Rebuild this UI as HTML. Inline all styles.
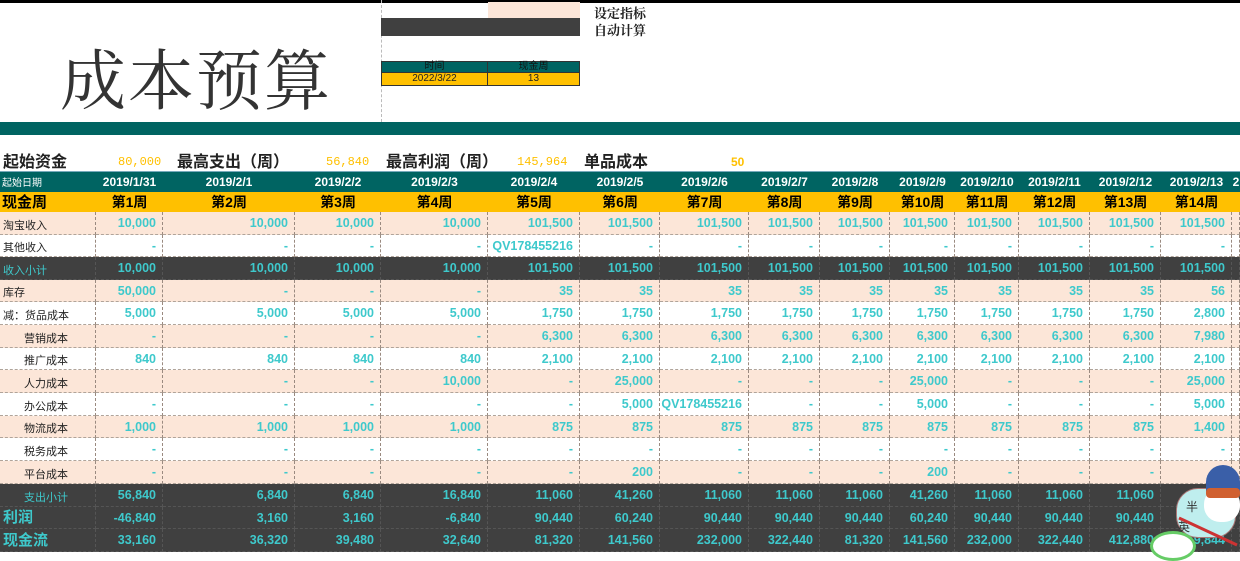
<!DOCTYPE html>
<html><head><meta charset="utf-8"><style>
*{margin:0;padding:0;box-sizing:border-box}
body{width:1240px;height:547px;overflow:hidden;background:#fff;position:relative;font-family:"Liberation Sans","Noto Sans CJK SC",sans-serif}
.a{position:absolute}
.r{position:absolute;left:0;width:1240px;display:flex}
.r div{flex:none;height:100%;text-align:right;padding-right:6px;font-size:12.5px;font-weight:bold;color:#3ec9cc;border-right:1px dashed #9a8a80;border-bottom:1px dashed #b0a49a;display:flex;align-items:center;justify-content:flex-end;white-space:nowrap;overflow:hidden}
.r div:first-child{justify-content:flex-start;text-align:left;padding-left:3px;font-weight:normal;color:#222;font-size:11px;align-items:flex-end;padding-bottom:1px}
.p{background:#fce6d8}.w{background:#fff}.d{background:#404040}
.d div{border-color:#555}
.i div:first-child{padding-left:24px}
.hd div{justify-content:center;padding:0;color:#fff;font-size:12px;border:none}
.wk div{justify-content:center;padding:0;color:#000;font-size:14px;border:none}
</style></head><body>
<div class="a" style="left:0;top:0;width:1240px;height:3px;background:#000"></div>
<div class="a" style="left:60px;top:28px;font-family:'Noto Serif CJK SC',serif;font-size:66px;color:#333;letter-spacing:2px">成本预算</div>
<div class="a" style="left:381px;top:0;height:122px;border-left:1px dashed #bbb"></div>
<div class="a" style="left:488px;top:2px;width:92px;height:16px;background:#fce6d8"></div>
<div class="a" style="left:381px;top:18px;width:199px;height:18px;background:#404040"></div>
<div class="a" style="left:594px;top:4px;font-family:'Noto Serif CJK SC',serif;font-size:13px;font-weight:bold;color:#222;line-height:17px">设定指标<br>自动计算</div>
<div class="a" style="left:381px;top:61px;width:199px;height:12px;background:#006462;font-size:10px;color:#111;display:flex;border:1px solid #333"><span style="width:107px;text-align:center;border-right:1px solid #333;line-height:10px">时间</span><span style="width:92px;text-align:center;line-height:10px">现金周</span></div>
<div class="a" style="left:381px;top:73px;width:199px;height:13px;background:#ffc000;font-size:10px;color:#222;display:flex;border:1px solid #333;border-top:none"><span style="width:107px;text-align:center;border-right:1px solid #333;line-height:12px">2022/3/22</span><span style="width:92px;text-align:center;line-height:12px">13</span></div>
<div class="a" style="left:0;top:122px;width:1240px;height:13px;background:#006462"></div>
<div class="a" style="left:3px;top:148px;font-size:16px;font-weight:bold;color:#222">起始资金</div>
<div class="a" style="left:118px;top:155px;font-size:12px;color:#ffc000;font-family:'Liberation Mono',monospace">80,000</div>
<div class="a" style="left:177px;top:148px;font-size:16px;font-weight:bold;color:#222">最高支出（周）</div>
<div class="a" style="left:326px;top:155px;font-size:12px;color:#ffc000;font-family:'Liberation Mono',monospace">56,840</div>
<div class="a" style="left:386px;top:148px;font-size:16px;font-weight:bold;color:#222;width:104px;overflow:hidden;white-space:nowrap">最高利润（周）</div>
<div class="a" style="left:517px;top:155px;font-size:12px;color:#ffc000;font-family:'Liberation Mono',monospace">145,964</div>
<div class="a" style="left:584px;top:148px;font-size:16px;font-weight:bold;color:#222">单品成本</div>
<div class="a" style="left:731px;top:155px;font-size:12px;font-weight:bold;color:#ffc000">50</div>

<div class="r hd" style="top:171px;height:21px;background:#006462;border-top:1px solid #7ab"><div style="width:96px;justify-content:flex-start;padding-left:2px;font-size:10px;align-items:center;color:#fff">起始日期</div><div style="width:67px">2019/1/31</div><div style="width:132px">2019/2/1</div><div style="width:86px">2019/2/2</div><div style="width:107px">2019/2/3</div><div style="width:92px">2019/2/4</div><div style="width:80px">2019/2/5</div><div style="width:89px">2019/2/6</div><div style="width:71px">2019/2/7</div><div style="width:70px">2019/2/8</div><div style="width:65px">2019/2/9</div><div style="width:64px">2019/2/10</div><div style="width:71px">2019/2/11</div><div style="width:71px">2019/2/12</div><div style="width:71px">2019/2/13</div><div style="width:8px">2</div></div>
<div class="r wk" style="top:192px;height:20px;background:#ffc000"><div style="width:96px;font-size:15px;font-weight:bold;color:#000;align-items:center;padding-left:2px">现金周</div><div style="width:67px">第1周</div><div style="width:132px">第2周</div><div style="width:86px">第3周</div><div style="width:107px">第4周</div><div style="width:92px">第5周</div><div style="width:80px">第6周</div><div style="width:89px">第7周</div><div style="width:71px">第8周</div><div style="width:70px">第9周</div><div style="width:65px">第10周</div><div style="width:64px">第11周</div><div style="width:71px">第12周</div><div style="width:71px">第13周</div><div style="width:71px">第14周</div><div style="width:8px"></div></div>

<div id="rows"></div>
<script>
(function(){
var W=[96,67,132,86,107,92,80,89,71,70,65,64,71,71,71,8];
var R=[
["p","淘宝收入","10,000|10,000|10,000|10,000|101,500|101,500|101,500|101,500|101,500|101,500|101,500|101,500|101,500|101,500|"],
["w","其他收入","-|-|-|-|QV178455216|-|-|-|-|-|-|-|-|-|"],
["d","收入小计","10,000|10,000|10,000|10,000|101,500|101,500|101,500|101,500|101,500|101,500|101,500|101,500|101,500|101,500|"],
["p","库存","50,000|-|-|-|35|35|35|35|35|35|35|35|35|56|"],
["w","减：货品成本","5,000|5,000|5,000|5,000|1,750|1,750|1,750|1,750|1,750|1,750|1,750|1,750|1,750|2,800|"],
["pi","营销成本","-|-|-|-|6,300|6,300|6,300|6,300|6,300|6,300|6,300|6,300|6,300|7,980|"],
["wi","推广成本","840|840|840|840|2,100|2,100|2,100|2,100|2,100|2,100|2,100|2,100|2,100|2,100|"],
["pi","人力成本","|-|-|10,000|-|25,000|-|-|-|25,000|-|-|-|25,000|"],
["wi","办公成本","-|-|-|-|-|5,000|QV178455216|-|-|5,000|-|-|-|5,000|"],
["pi","物流成本","1,000|1,000|1,000|1,000|875|875|875|875|875|875|875|875|875|1,400|"],
["wi","税务成本","-|-|-|-|-|-|-|-|-|-|-|-|-|-|"],
["pi","平台成本","-|-|-|-|-|200|-|-|-|200|-|-|-||"],
["di","支出小计","56,840|6,840|6,840|16,840|11,060|41,260|11,060|11,060|11,060|41,260|11,060|11,060|11,060||"],
["dL","利润","-46,840|3,160|3,160|-6,840|90,440|60,240|90,440|90,440|90,440|60,240|90,440|90,440|90,440||"],
["dL","现金流","33,160|36,320|39,480|32,640|81,320|141,560|232,000|322,440|81,320|141,560|232,000|322,440|412,880|469,844|"]];
var h="",yy=212,hs=[23,22,23,22,23,23,22,23,23,22,23,23,23,22,23];
R.forEach(function(r,k){var c=r[0][0],cls=c+(r[0].indexOf("i")>0?" i":"");
var v=r[2].split("|");h+='<div class="r '+cls+'" style="top:'+yy+'px;height:'+hs[k]+'px">';
var ls=c=="d"?"color:#3ec9cc;":"";if(r[0].indexOf("L")>0)ls+="font-size:15px;font-weight:bold;";
h+='<div style="width:96px;'+ls+'">'+r[1]+'</div>';
for(var j=1;j<16;j++)h+='<div style="width:'+W[j]+'px">'+(v[j-1]||"")+'</div>';
h+='</div>';yy+=hs[k];});
document.getElementById("rows").innerHTML=h;
})();
</script>
<div class="a" style="left:1176px;top:460px;width:64px;height:87px;">
<div class="a" style="left:0;top:28px;width:60px;height:50px;background:#bfeeee;border:1px solid #a77;border-radius:22px"></div>
<div class="a" style="left:10px;top:38px;font-size:12px;color:#333">半</div>
<div class="a" style="left:2px;top:58px;font-size:12px;color:#333">英</div>
<div class="a" style="left:30px;top:5px;width:34px;height:30px;background:#3a5fa8;border-radius:17px 17px 4px 4px"></div>
<div class="a" style="left:28px;top:28px;width:36px;height:34px;background:#fff;border-radius:16px"></div>
<div class="a" style="left:30px;top:28px;width:34px;height:10px;background:#d06030;border-radius:4px"></div>
<div class="a" style="left:0;top:70px;width:64px;height:3px;background:#c33;transform:rotate(25deg)"></div>
</div>
<div class="a" style="left:1150px;top:531px;width:46px;height:30px;border:3px solid #6c6;border-radius:50%;background:#fff"></div>
</body></html>
